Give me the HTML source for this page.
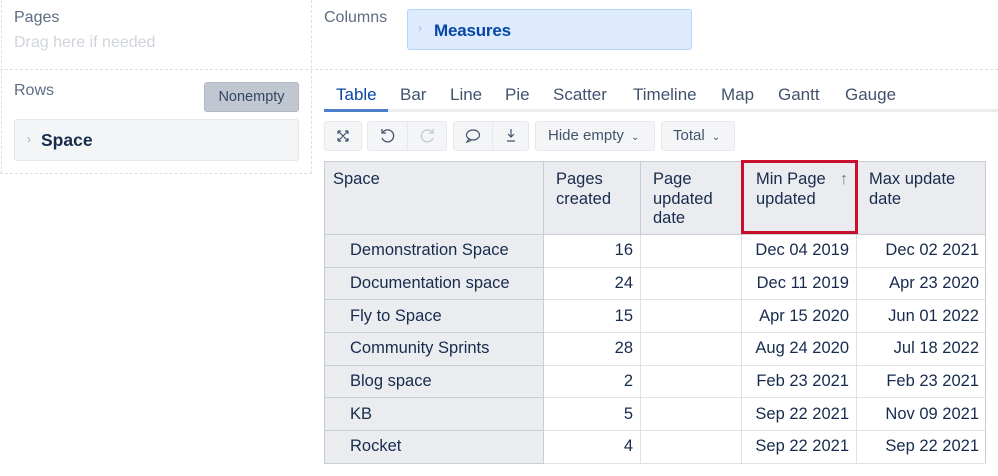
<!DOCTYPE html>
<html><head><meta charset="utf-8"><style>
*{box-sizing:border-box;margin:0;padding:0}
body{width:998px;height:476px;background:#fff;font-family:"Liberation Sans",Arial,sans-serif;position:relative;overflow:hidden;color:#172b4d}
.a{position:absolute;white-space:nowrap}
.lbl{font-size:16px;color:#5e6c84}
.btn{position:absolute;background:#f4f5f7;border:1px solid #e6e8ec;border-radius:3px;top:121px;height:30px}
.sep{position:absolute;top:0;bottom:0;width:1px;background:#e6e8ec}
.tw{position:absolute;left:324px;top:161px;width:662px;height:303px;overflow:hidden}
table{width:662px;table-layout:fixed;border-collapse:collapse;font-size:16.5px;color:#172b4d}
td,th{border:1px solid #dfe1e6;font-weight:normal;height:32.7px;padding:0 7px;overflow:hidden;white-space:nowrap}
th{background:#ebecf0;text-align:left;vertical-align:top;padding:8px 8px 0 12px;line-height:19.5px;height:73px;border-color:#c9ccd3;white-space:normal}
td.n{background:#ebecf0;padding-left:25px;border-color:#c9ccd3}
td.r{text-align:right}
</style></head><body>
<div class="a" style="left:311px;top:0;height:174px;border-left:1px dashed #dcdfe4"></div>
<div class="a" style="left:0;top:69px;width:998px;border-top:1px dashed #dcdfe4"></div>
<div class="a" style="left:1px;top:0;height:174px;border-left:1px dashed #dcdfe4"></div>
<div class="a" style="left:0;top:173px;width:312px;border-top:1px dashed #dcdfe4"></div>

<div class="a lbl" style="left:14px;top:9px">Pages</div>
<div class="a" style="left:14px;top:34px;font-size:16px;color:#d0d4db">Drag here if needed</div>
<div class="a lbl" style="left:324px;top:9px">Columns</div>
<div class="a" style="left:407px;top:9px;width:285px;height:41px;background:#deebff;border:1px solid #b3d4fb;border-radius:3px"></div>
<div class="a" style="left:418px;top:21px;font-size:12px;color:#a5b8d6">›</div>
<div class="a" style="left:434px;top:21px;font-size:17px;color:#0747a6;font-weight:bold;letter-spacing:-0.2px">Measures</div>

<div class="a lbl" style="left:14px;top:82px">Rows</div>
<div class="a" style="left:204px;top:82px;width:95px;height:30px;background:#c1c7d0;border:1px solid #b3b9c4;border-radius:3px;font-size:14.5px;color:#344563;text-align:center;line-height:28px">Nonempty</div>
<div class="a" style="left:14px;top:119px;width:285px;height:42px;background:#f4f5f7;border:1px solid #e4e6ea;border-radius:3px"></div>
<div class="a" style="left:27px;top:132px;font-size:12px;color:#a5adba">›</div>
<div class="a" style="left:41px;top:130px;font-size:17.5px;color:#172b4d;font-weight:bold">Space</div>

<div class="a" style="left:324px;top:109px;width:674px;height:3px;background:#ebecf0"></div>
<div class="a" style="left:324px;top:109px;width:64px;height:3px;background:#4c7ecb"></div>
<div class="a" style="left:336px;top:85px;font-size:17px;color:#0747a6">Table</div>
<div class="a" style="left:400px;top:85px;font-size:17px;color:#42526e">Bar</div>
<div class="a" style="left:450px;top:85px;font-size:17px;color:#42526e">Line</div>
<div class="a" style="left:505px;top:85px;font-size:17px;color:#42526e">Pie</div>
<div class="a" style="left:553px;top:85px;font-size:17px;color:#42526e">Scatter</div>
<div class="a" style="left:633px;top:85px;font-size:17px;color:#42526e">Timeline</div>
<div class="a" style="left:721px;top:85px;font-size:17px;color:#42526e">Map</div>
<div class="a" style="left:778px;top:85px;font-size:17px;color:#42526e">Gantt</div>
<div class="a" style="left:845px;top:85px;font-size:17px;color:#42526e">Gauge</div>

<div class="btn" style="left:324px;width:38px">
<svg width="36" height="28" viewBox="0 0 36 28" fill="none" stroke="#42526e" stroke-width="1.2"><path d="M13 9l10 10M23 9l-10 10M13 9h3M13 9v3M23 9h-3M23 9v3M13 19h3M13 19v-3M23 19h-3M23 19v-3"/></svg></div>
<div class="btn" style="left:367px;width:80px"><div class="sep" style="left:39px"></div>
<svg class="a" style="left:0;top:0" width="78" height="28" viewBox="0 0 78 28" fill="none" stroke-width="1.3"><path d="M15 10a6 6 0 1 1 -1 6" stroke="#42526e"/><path d="M14 7v4h4" stroke="#42526e"/><path d="M64 10a6 6 0 1 0 1 6" stroke="#c1c7d0"/><path d="M65 7v4h-4" stroke="#c1c7d0"/></svg></div>
<div class="btn" style="left:453px;width:76px"><div class="sep" style="left:38px"></div>
<svg class="a" style="left:0;top:0" width="74" height="28" viewBox="0 0 74 28" fill="none" stroke="#42526e" stroke-width="1.2"><ellipse cx="19" cy="13" rx="6.5" ry="5"/><path d="M15 17l-2 3 4-1.5"/><path d="M57 7v8M54 12l3 3 3-3M53 19h8"/></svg></div>
<div class="btn" style="left:535px;width:120px;font-size:15px;color:#42526e;line-height:27px;padding-left:12px">Hide empty <span style="font-size:10px;margin-left:3px">⌄</span></div>
<div class="btn" style="left:661px;width:74px;font-size:15px;color:#42526e;line-height:27px;padding-left:11px">Total <span style="font-size:10px;margin-left:3px">⌄</span></div>

<div class="tw"><table>
<colgroup><col style="width:219px"><col style="width:97px"><col style="width:101px"><col style="width:115px"><col style="width:130px"></colgroup>
<tr><th style="padding-left:8px">Space</th><th>Pages<br>created</th><th>Page<br>updated<br>date</th><th style="position:relative;padding-left:14px">Min Page<br>updated<span style="position:absolute;right:8px;top:8px;color:#6b778c">↑</span></th><th>Max update<br>date</th></tr>
<tr><td class="n">Demonstration Space</td><td class="r">16</td><td></td><td class="r">Dec 04 2019</td><td class="r">Dec 02 2021</td></tr>
<tr><td class="n">Documentation space</td><td class="r">24</td><td></td><td class="r">Dec 11 2019</td><td class="r">Apr 23 2020</td></tr>
<tr><td class="n">Fly to Space</td><td class="r">15</td><td></td><td class="r">Apr 15 2020</td><td class="r">Jun 01 2022</td></tr>
<tr><td class="n">Community Sprints</td><td class="r">28</td><td></td><td class="r">Aug 24 2020</td><td class="r">Jul 18 2022</td></tr>
<tr><td class="n">Blog space</td><td class="r">2</td><td></td><td class="r">Feb 23 2021</td><td class="r">Feb 23 2021</td></tr>
<tr><td class="n">KB</td><td class="r">5</td><td></td><td class="r">Sep 22 2021</td><td class="r">Nov 09 2021</td></tr>
<tr><td class="n">Rocket</td><td class="r">4</td><td></td><td class="r">Sep 22 2021</td><td class="r">Sep 22 2021</td></tr>
</table></div>
<div class="a" style="left:985px;top:161px;width:1px;height:302px;background:#c9ccd3"></div>
<div class="a" style="left:741px;top:160px;width:117px;height:74px;border:3px solid #c8102e"></div>
</body></html>
